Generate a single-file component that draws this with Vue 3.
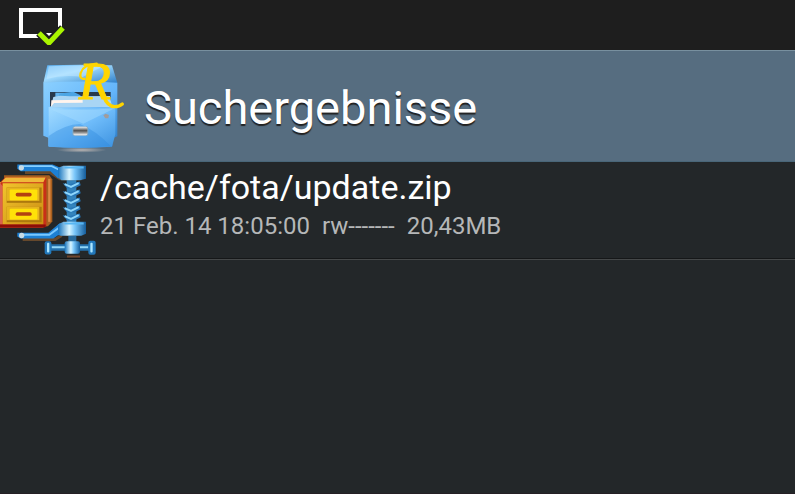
<template>
  <div class="explorer">
    <div class="status-bar">
      <svg class="status-icon" viewBox="0 0 48 40" aria-hidden="true">
        <path d="M24 31H3V5H42V22" fill="none" stroke="#fff" stroke-width="4" />
        <path d="M21 28l10 10L45 23" fill="none" stroke="#1e1e1e" stroke-width="8" />
        <path d="M28 28h6l-3 3z" fill="#fff" />
        <path d="M21 28l10 10L45 23" fill="none" stroke="#aaf500" stroke-width="5" />
      </svg>
    </div>

    <header class="title-bar">
      <svg class="app-icon" viewBox="0 0 330 333" aria-hidden="true">
        <defs>
          <linearGradient id="cab-top" x1="0" y1="0" x2="1" y2="1">
            <stop offset="0" stop-color="#54aef5" />
            <stop offset=".4" stop-color="#a2dcff" />
            <stop offset="1" stop-color="#2f7fc8" />
          </linearGradient>
          <linearGradient id="cab-body" x1="0" y1="0" x2="1" y2="1">
            <stop offset="0" stop-color="#8bd0ff" />
            <stop offset=".55" stop-color="#64b5fa" />
            <stop offset="1" stop-color="#2878c4" />
          </linearGradient>
          <linearGradient id="cab-front" x1="0" y1="0" x2="1" y2="1">
            <stop offset="0" stop-color="#a4dcff" />
            <stop offset=".5" stop-color="#6fbcfa" />
            <stop offset="1" stop-color="#3c92e0" />
          </linearGradient>
          <linearGradient id="cab-handle" x1="0" y1="0" x2="0" y2="1">
            <stop offset="0" stop-color="#f4f4f4" />
            <stop offset=".45" stop-color="#555" />
            <stop offset=".6" stop-color="#777" />
            <stop offset="1" stop-color="#fff" />
          </linearGradient>
          <radialGradient id="cab-shadow">
            <stop offset="0" stop-color="#b9b4b2" />
            <stop offset="1" stop-color="#b9b4b2" stop-opacity="0" />
          </radialGradient>
        </defs>
        <ellipse cx="155" cy="297" rx="75" ry="8" fill="url(#cab-shadow)" />
        <path d="M52 43Q150 39 246 43L262 96H40Z" fill="url(#cab-top)" />
        <path d="M56 46Q140 42 220 45L158 78Q100 70 50 84Z" fill="#c5eaff" opacity=".5" />
        <path d="M40 95Q150 88 262 95V256L247 262V286Q150 294 55 286V260L40 254Z" fill="url(#cab-body)" />
        <path d="M60 123H242V166H60Z" fill="#28394c" />
        <path d="M76 125H128V140H76Z" fill="#62b3ee" />
        <path d="M88 128L130 122 150 132 165 152H84Z" fill="#4ba5e4" />
        <path d="M70 138L90 134 120 136 240 135 246 168 62 170Z" fill="#a9d5f4" />
        <path d="M64 148L158 146V155L72 156 63 168Z" fill="#fff4ed" />
        <path d="M56 168Q150 178 256 167V250L246 287Q150 293 56 287Z" fill="url(#cab-front)" />
        <path d="M58 173Q150 181 254 172L160 218Z" fill="#a9deff" opacity=".45" />
        <path d="M56 255Q105 220 150 219Q200 240 243 286Q150 294 56 287Z" fill="#2c88dd" opacity=".35" />
        <rect x="127" y="226" width="48" height="29" rx="7" fill="#7eaaca" />
        <rect x="130" y="227" width="42" height="26" rx="5" fill="url(#cab-handle)" />
        <path d="M220 193l7-5 10 4-2 10h-9z" fill="#a29c9b" />
        <text x="146" y="143" class="app-letter">R</text>
        <path d="M163 84Q147 84 152 66Q160 40 200 38" fill="none" stroke="#ffd500" stroke-width="7" stroke-linecap="round" />
        <path d="M220 134Q232 167 254 167Q268 167 277 159" fill="none" stroke="#ffd500" stroke-width="10" stroke-linecap="round" />
      </svg>
      <h1 class="title">Suchergebnisse</h1>
    </header>

    <ul class="file-list">
      <li v-for="file in files" :key="file.path" class="file-row">
        <svg class="file-icon" viewBox="0 21 288 288" aria-hidden="true">
          <defs>
            <linearGradient id="clamp" x1="0" y1="0" x2="1" y2="0">
              <stop offset="0" stop-color="#1673bd" />
              <stop offset=".4" stop-color="#d9f5ff" />
              <stop offset=".6" stop-color="#79c6fa" />
              <stop offset="1" stop-color="#145c9a" />
            </linearGradient>
            <linearGradient id="box" x1="0" y1="0" x2="1" y2="1">
              <stop offset="0" stop-color="#f2c52d" />
              <stop offset="1" stop-color="#ca8d12" />
            </linearGradient>
          </defs>
          <path d="M75 51H150L180 70H245" fill="none" stroke="#65482c" stroke-width="9" />
          <path d="M68 252H165L185 240" fill="none" stroke="#65482c" stroke-width="9" />
          <path d="M52 27H158L185 38V68H174L151 47H62L52 40Z" fill="#1d80d3" />
          <path d="M58 32H155L180 44" fill="none" stroke="#86d0ff" stroke-width="5" />
          <path d="M52 232H145L178 204H190V239H174L160 249H62L52 243Z" fill="#1d80d3" />
          <path d="M60 238H148L178 216" fill="none" stroke="#78c8ff" stroke-width="6" />
          <circle cx="64" cy="37" r="8" fill="#c6dbe5" />
          <circle cx="65" cy="240" r="8" fill="#c6dbe5" />
          <path d="M12 59H148L157 72V198L144 212H20Z" fill="#a85f1e" />
          <path d="M148 70V199" stroke="#df8a42" stroke-width="7" />
          <path d="M0 80L16 65H139V213L128 217H0Z" fill="#c83017" />
          <path d="M0 84L17 66H137L130 80H0Z" fill="#efb93a" />
          <path d="M0 82L8 92V207H0Z" fill="#d9644e" />
          <path d="M8 83H130V207H8Z" fill="url(#box)" />
          <path d="M0 211H137" stroke="#8c0d08" stroke-width="8" />
          <g v-for="y in [96, 154]" :key="y">
            <rect x="20" :y="y" width="105" height="46" fill="#ad790d" />
            <rect x="20" :y="y" width="98" height="40" fill="#e5b31f" />
            <rect x="29" :y="y + 6" width="83" height="32" rx="3" fill="#ffe108" />
            <rect x="47" :y="y + 16" width="48" height="11" rx="5" fill="#b34310" />
          </g>
          <path d="M200 74H229V207H200Z" fill="#3484bd" />
          <g v-for="y in [83, 107, 131, 155, 179]" :key="y">
            <path :d="`M188 ${y}L207 ${y + 3} 239 ${y - 5} 242 ${y + 6} 224 ${y + 15} 202 ${y + 16}Z`" fill="#2877b7" />
            <path :d="`M194 ${y + 3}L213 ${y + 11} 236 ${y}`" fill="none" stroke="#8fd6fb" stroke-width="6" />
          </g>
          <path d="M174 37L190 31H258V70L240 74H184L174 65Z" fill="url(#clamp)" />
          <path d="M174 207L190 199H258V235L244 241H182L174 234Z" fill="url(#clamp)" />
          <path d="M193 36H251M193 204H251" stroke="#57b6f3" stroke-width="6" />
          <path d="M205 241H229V260H205Z" fill="#286b9e" />
          <path d="M148 266H276V286H148Z" fill="#226faa" />
          <path d="M155 275H265" stroke="#92d6f7" stroke-width="6" />
          <rect x="134" y="257" width="20" height="40" rx="6" fill="#2278bb" />
          <rect x="141" y="262" width="7" height="29" rx="3" fill="#ace6ff" />
          <rect x="265" y="256" width="22" height="42" rx="6" fill="#2278bb" />
          <rect x="271" y="262" width="7" height="29" rx="3" fill="#ace6ff" />
          <rect x="194" y="257" width="46" height="38" rx="6" fill="url(#clamp)" />
          <path d="M201 303H240" stroke="#70462d" stroke-width="6" />
        </svg>
        <div class="file-info">
          <div class="file-path">{{ file.path }}</div>
          <div class="file-meta">
            <span>{{ file.date }}</span>
            <span>{{ file.permissions }}</span>
            <span>{{ file.size }}</span>
          </div>
        </div>
      </li>
    </ul>
  </div>
</template>

<script setup>
import { ref } from 'vue'

const files = ref([
  {
    path: '/cache/fota/update.zip',
    date: '21 Feb. 14 18:05:00',
    permissions: 'rw-------',
    size: '20,43MB'
  }
])
</script>

<style>
body {
  margin: 0;
  background: #232729;
}
</style>

<style scoped>
.explorer {
  box-sizing: border-box;
  min-height: 100vh;
  background: #232729;
  border-bottom: 1px solid #251f25;
  color: #ffffff;
  font-family: Roboto, sans-serif;
}

.status-bar {
  display: flex;
  align-items: center;
  height: 50px;
  padding-left: 18px;
  background: #1e1e1e;
}

.status-icon {
  width: 48px;
  height: 40px;
}

.title-bar {
  display: flex;
  align-items: center;
  box-sizing: border-box;
  height: 112px;
  padding-left: 30px;
  background: #566d80;
  box-shadow: inset 0 1px #78909f, inset 0 -1px #496678;
}

.app-icon {
  flex: none;
  width: 110px;
  height: 111px;
}

.app-letter {
  font-family: "Liberation Serif", serif;
  font-size: 158px;
  font-style: italic;
  fill: #ffd500;
  stroke: #ffd500;
  stroke-width: 3px;
}

.title {
  margin: 0;
  padding: 4px 0 0 4px;
  font-size: 47px;
  font-weight: 400;
  line-height: 56px;
  text-shadow: 0 2px 1px #222222;
}

.file-list {
  margin: 0;
  padding: 0;
  list-style: none;
}

.file-row {
  display: flex;
  border-bottom: 1px solid #454849;
  box-shadow: inset 0 -1px #151718;
}

.file-icon {
  flex: none;
  width: 96px;
  height: 97px;
}

.file-info {
  padding: 4px 0 0 4px;
}

.file-path {
  font-size: 34px;
  line-height: 42px;
}

.file-meta {
  display: flex;
  gap: 12px;
  color: #b5b7b8;
  font-size: 24px;
  line-height: 36px;
}
</style>
